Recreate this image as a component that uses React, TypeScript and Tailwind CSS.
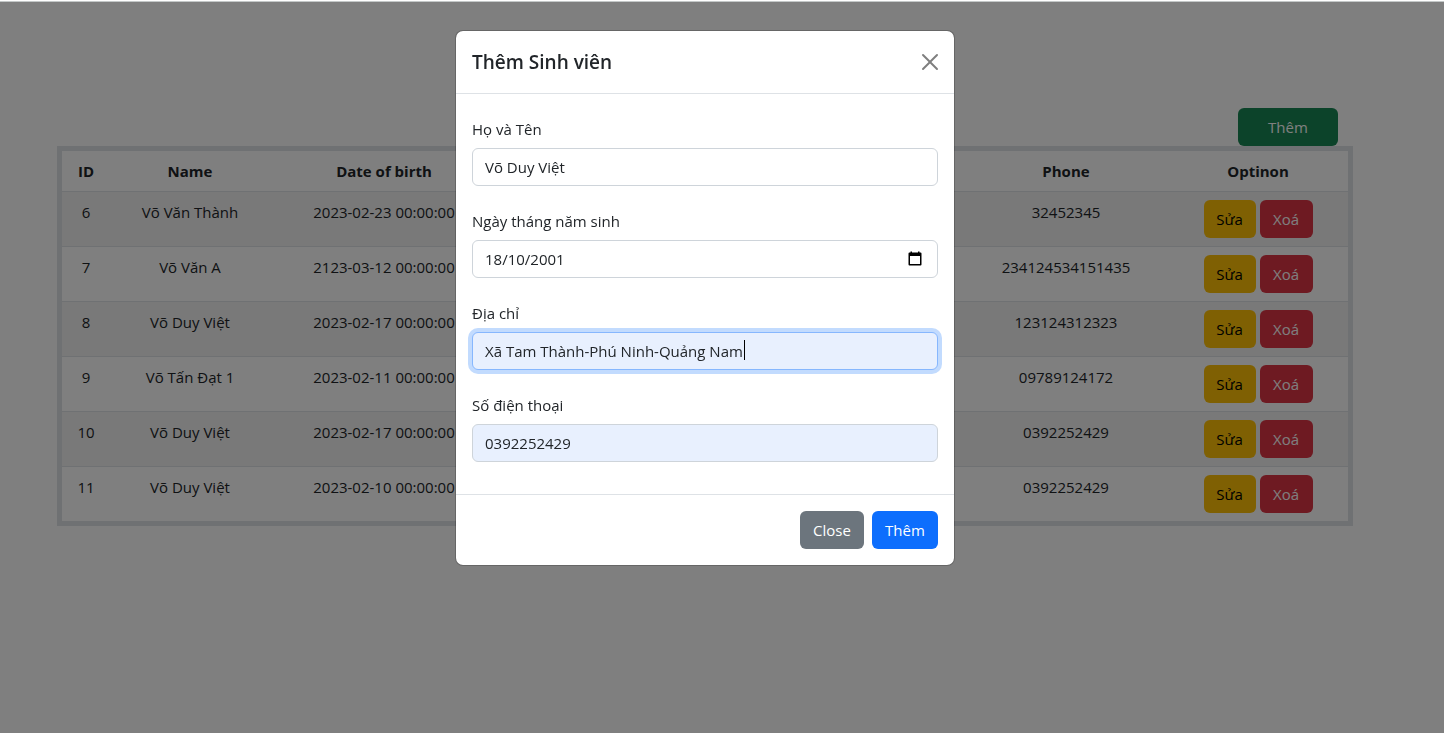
import React from "react";

type Student = { id: number; name: string; birth: string; phone: string };

const students: Student[] = [
  { id: 6, name: "Võ Văn Thành", birth: "2023-02-23 00:00:00", phone: "32452345" },
  { id: 7, name: "Võ Văn A", birth: "2123-03-12 00:00:00", phone: "234124534151435" },
  { id: 8, name: "Võ Duy Việt", birth: "2023-02-17 00:00:00", phone: "123124312323" },
  { id: 9, name: "Võ Tấn Đạt 1", birth: "2023-02-11 00:00:00", phone: "09789124172" },
  { id: 10, name: "Võ Duy Việt", birth: "2023-02-17 00:00:00", phone: "0392252429" },
  { id: 11, name: "Võ Duy Việt", birth: "2023-02-10 00:00:00", phone: "0392252429" },
];

const button = "h-[38px] rounded-md px-3 text-[15px] leading-6";
const label = "mb-[7px] block pt-[7px] leading-6";
const field = "block h-[38px] w-full rounded-md border px-3 leading-6 outline-none";

function StudentTable() {
  return (
    <div className="border-5 border-[#dee2e6]">
      <table className="w-full table-fixed text-center leading-6">
        <colgroup>
          <col className="w-12" />
          <col className="w-40" />
          <col className="w-[228px]" />
          <col />
          <col className="w-[204px]" />
          <col className="w-[180px]" />
        </colgroup>
        <thead>
          <tr className="border-b border-[#dee2e6]">
            <th className="p-2 font-bold">ID</th>
            <th className="p-2 font-bold">Name</th>
            <th className="p-2 font-bold">Date of birth</th>
            <td />
            <th className="p-2 font-bold">Phone</th>
            <th className="p-2 font-bold">Optinon</th>
          </tr>
        </thead>
        <tbody>
          {students.map((s) => (
            <tr key={s.id} className="border-b border-[#dee2e6] align-top last:border-b-0 odd:bg-[#f2f2f2]">
              <td className="p-2">{s.id}</td>
              <td className="p-2">{s.name}</td>
              <td className="p-2 whitespace-nowrap">{s.birth}</td>
              <td />
              <td className="p-2">{s.phone}</td>
              <td className="p-2">
                <div className="flex justify-center gap-1">
                  <button type="button" className={`${button} min-w-[52px] bg-[#ffc107] text-black`}>Sửa</button>
                  <button type="button" className={`${button} min-w-[53px] bg-[#dc3545] text-white`}>Xoá</button>
                </div>
              </td>
            </tr>
          ))}
        </tbody>
      </table>
    </div>
  );
}

function StudentDialog() {
  return (
    <div
      role="dialog"
      aria-modal="true"
      aria-labelledby="dialog-title"
      className="w-full max-w-[500px] rounded-lg border border-black/20 bg-white bg-clip-padding"
    >
      <div className="flex items-center justify-between border-b border-[#dee2e6] p-4">
        <h5 id="dialog-title" className="text-[19px] leading-[30px] font-semibold">Thêm Sinh viên</h5>
        <button type="button" aria-label="Close" className="text-black/50">
          <svg viewBox="0 0 16 16" className="size-4" fill="currentColor" overflow="visible">
            <path d="M.293.293a1 1 0 0 1 1.414 0L8 6.586 14.293.293a1 1 0 1 1 1.414 1.414L9.414 8l6.293 6.293a1 1 0 0 1-1.414 1.414L8 9.414l-6.293 6.293a1 1 0 0 1-1.414-1.414L6.586 8 .293 1.707a1 1 0 0 1 0-1.414z" />
          </svg>
        </button>
      </div>
      <form className="flex flex-col gap-4 px-4 pt-4 pb-8">
        <div>
          <label htmlFor="name" className={label}>Họ và Tên</label>
          <input id="name" type="text" defaultValue="Võ Duy Việt" className={`${field} border-[#ced4da]`} />
        </div>
        <div>
          <label htmlFor="birth" className={label}>Ngày tháng năm sinh</label>
          <div className="flex h-[38px] items-center rounded-md border border-[#ced4da] pr-3.5 pl-3">
            <input id="birth" type="text" defaultValue="18/10/2001" className="min-w-0 flex-1 leading-6 outline-none" />
            <button type="button" aria-label="Calendar" className="text-black">
              <svg viewBox="0 0 16 16" className="size-4" fill="currentColor">
                <path d="M3.5 0.5h1.5v1h6v-1h1.5v1h1a1 1 0 0 1 1 1v11a1 1 0 0 1-1 1h-11a1 1 0 0 1-1-1v-11a1 1 0 0 1 1-1h1zM3 5v8h10V5z" />
              </svg>
            </button>
          </div>
        </div>
        <div>
          <label htmlFor="address" className={label}>Địa chỉ</label>
          <div className="relative">
            <input
              id="address"
              type="text"
              defaultValue="Xã Tam Thành-Phú Ninh-Quảng Nam"
              className={`${field} border-[#86b7fe] bg-[#e8f0fe] caret-transparent ring-4 ring-[#c2dbfe]`}
            />
            <span className="absolute top-2 left-[272px] h-5 w-px bg-black" />
          </div>
        </div>
        <div>
          <label htmlFor="phone" className={label}>Số điện thoại</label>
          <input id="phone" type="text" defaultValue="0392252429" className={`${field} border-[#ced4da] bg-[#e8f0fe]`} />
        </div>
      </form>
      <div className="flex justify-end gap-2 border-t border-[#dee2e6] p-4">
        <button type="button" className={`${button} min-w-16 bg-[#6c757d] text-white`}>Close</button>
        <button type="button" className={`${button} min-w-[66px] bg-[#0d6efd] text-white`}>Thêm</button>
      </div>
    </div>
  );
}

export default function App() {
  return (
    <div className="min-h-screen bg-white font-['Open_Sans','Noto_Sans',sans-serif] text-[15px] text-[#212529]">
      <div className="h-0.5 border-b border-[#c4c8c8]" />
      <main className="pt-[106px] pr-[34px]">
        <div className="mx-auto max-w-[1320px] px-3">
          <div className="flex justify-end pr-[15px]">
            <button type="button" className={`${button} w-[100px] bg-[#198754] text-white`}>Thêm</button>
          </div>
          <StudentTable />
        </div>
      </main>
      <div className="fixed inset-x-0 top-0.5 bottom-0 overflow-y-auto bg-black/50 pt-7 pr-[34px]">
        <div className="flex justify-center">
          <StudentDialog />
        </div>
      </div>
    </div>
  );
}
